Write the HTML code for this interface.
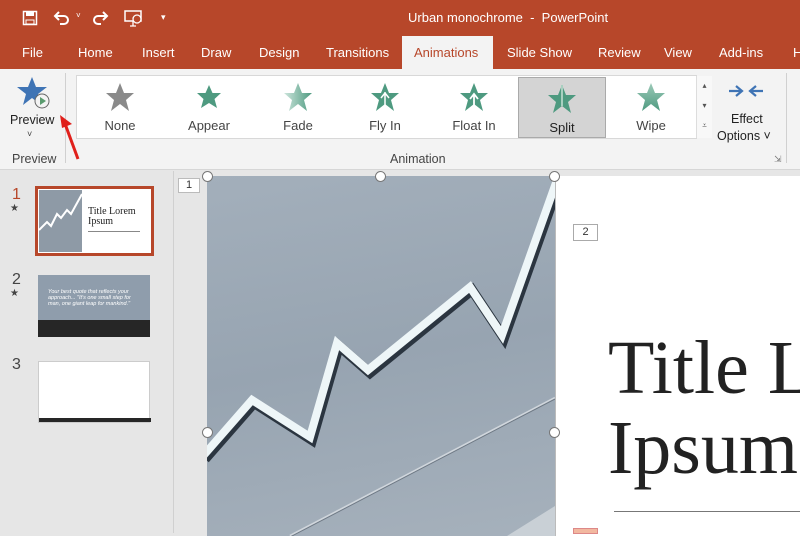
<!DOCTYPE html>
<html><head><meta charset="utf-8"><style>
*{margin:0;padding:0;box-sizing:border-box}
body{width:800px;height:533px;overflow:hidden;font-family:"Liberation Sans",sans-serif;background:#e6e6e6;position:relative}
.abs{position:absolute}
.top{left:0;top:0;width:800px;height:69px;background:#b7472a;color:#fff}
.tab{position:absolute;top:45px;font-size:13px;color:#fff}
.rib{left:0;top:69px;width:800px;height:101px;background:#f3f3f3;border-bottom:1px solid #d6d6d6}
.lbl{font-size:12.5px;color:#444;position:absolute;text-align:center}
.gal{left:76px;top:75px;width:621px;height:64px;background:#fff;border:1px solid #d8d8d8}
.it{position:absolute;top:0;width:86px;height:62px;text-align:center}
.it svg{position:absolute;left:28px;top:6px}
.it span{position:absolute;left:0;right:0;top:42px;font-size:13px;color:#444}
</style></head><body>
<div class="abs top">
 <svg class="abs" style="left:22px;top:10px" width="16" height="16" viewBox="0 0 16 16"><rect x="1.5" y="1.5" width="13" height="13" fill="none" stroke="#fff" stroke-width="1.5"/><rect x="4" y="2" width="8" height="4" fill="#fff"/><rect x="4" y="10" width="8" height="4" fill="none" stroke="#fff"/></svg>
 <svg class="abs" style="left:52px;top:10px" width="20" height="16" viewBox="0 0 20 16"><path d="M3 6h9a4 4 0 0 1 0 8H8" fill="none" stroke="#fff" stroke-width="2"/><path d="M7 2L3 6l4 4" fill="none" stroke="#fff" stroke-width="2"/></svg>
 <div class="abs" style="left:76px;top:11px;font-size:8px">˅</div>
 <svg class="abs" style="left:92px;top:10px" width="18" height="16" viewBox="0 0 18 16"><path d="M15 6H6a4 4 0 0 0 0 8h3" fill="none" stroke="#fff" stroke-width="2"/><path d="M11 2l4 4-4 4" fill="none" stroke="#fff" stroke-width="2"/></svg>
 <svg class="abs" style="left:124px;top:10px" width="20" height="17" viewBox="0 0 20 17"><rect x="1" y="1" width="16" height="10" fill="none" stroke="#fff" stroke-width="1.5"/><circle cx="13" cy="9" r="4" fill="#b7472a" stroke="#fff" stroke-width="1.3"/><path d="M9 11v5M6 16h6" stroke="#fff" stroke-width="1.3"/></svg>
 <div class="abs" style="left:161px;top:12px;font-size:9px">▾</div>
 <div class="abs" style="left:408px;top:10px;font-size:13px">Urban monochrome&nbsp; - &nbsp;PowerPoint</div>
 <span class="tab" style="left:22px">File</span>
 <span class="tab" style="left:78px">Home</span>
 <span class="tab" style="left:142px">Insert</span>
 <span class="tab" style="left:201px">Draw</span>
 <span class="tab" style="left:259px">Design</span>
 <span class="tab" style="left:326px">Transitions</span>
 <div class="abs" style="left:402px;top:36px;width:91px;height:34px;background:#f3f3f3"></div>
 <span class="tab" style="left:414px;color:#b7472a">Animations</span>
 <span class="tab" style="left:507px">Slide Show</span>
 <span class="tab" style="left:598px">Review</span>
 <span class="tab" style="left:664px">View</span>
 <span class="tab" style="left:719px">Add-ins</span>
 <span class="tab" style="left:793px">H</span>
</div>
<div class="abs rib">
 <svg class="abs" style="left:17px;top:8px" width="34" height="32" viewBox="0 0 34 32"><polygon points="15,0 19,10 30,10 21,17 24,28 15,21 6,28 9,17 0,10 11,10" fill="#3f74b5"/><circle cx="25" cy="24" r="7" fill="#f3f3f3" stroke="#666"/><polygon points="23,20 29,24 23,28" fill="#5a9b6e"/></svg>
 <div class="lbl" style="left:10px;top:44px;color:#222">Preview</div>
 <div class="lbl" style="left:27px;top:60px;font-size:9px">˅</div>
 <div class="lbl" style="left:12px;top:83px">Preview</div>
 <div class="abs" style="left:65px;top:4px;width:1px;height:90px;background:#d0d0d0"></div>
 <div class="lbl" style="left:390px;top:83px">Animation</div>
 <div class="abs" style="left:774px;top:85px;font-size:9px;color:#777">⇲</div>
 <svg class="abs" style="left:728px;top:14px" width="36" height="16" viewBox="0 0 36 16"><path d="M1 8h12M8 3l6 5-6 5M35 8H23M28 3l-6 5 6 5" fill="none" stroke="#3f74b5" stroke-width="2.2"/></svg>
 <div class="lbl" style="left:731px;top:43px;color:#222">Effect</div>
 <div class="lbl" style="left:717px;top:60px;color:#222">Options ˅</div>
 <div class="abs" style="left:786px;top:4px;width:1px;height:90px;background:#d0d0d0"></div>
</div>
<svg class="abs" style="left:58px;top:112px" width="30" height="50" viewBox="0 0 30 50"><path d="M20 47L6 9" stroke="#e0201b" stroke-width="3"/><polygon points="2,3 14,12 4,16" fill="#e0201b"/></svg>
<div class="abs gal">
 <div class="it" style="left:0"><svg width="30" height="30" viewBox="0 0 30 30"><polygon points="15,1 19,11 29,11 21,18 24,29 15,22 6,29 9,18 1,11 11,11" fill="#8a8a8a"/></svg><span>None</span></div>
 <div class="it" style="left:89px"><svg width="30" height="30" viewBox="0 0 30 30"><polygon points="15,3 18.5,11 27,11 20.5,17 23,26 15,21 7,26 9.5,17 3,11 11.5,11" fill="#4e9a80"/></svg><span>Appear</span></div>
 <div class="it" style="left:178px"><svg width="30" height="30" viewBox="0 0 30 30"><defs><linearGradient id="g"><stop offset="0" stop-color="#cde5dc"/><stop offset="1" stop-color="#4e9a80"/></linearGradient></defs><polygon points="15,1 19,11 29,11 21,18 24,29 15,22 6,29 9,18 1,11 11,11" fill="url(#g)"/></svg><span>Fade</span></div>
 <div class="it" style="left:265px"><svg width="30" height="30" viewBox="0 0 30 30"><polygon points="15,1 19,11 29,11 21,18 24,29 15,22 6,29 9,18 1,11 11,11" fill="#4e9a80"/><path d="M15 10v14M11 16l4-5 4 5" stroke="#fff" stroke-width="1.5" fill="none"/></svg><span>Fly In</span></div>
 <div class="it" style="left:354px"><svg width="30" height="30" viewBox="0 0 30 30"><polygon points="15,1 19,11 29,11 21,18 24,29 15,22 6,29 9,18 1,11 11,11" fill="#4e9a80"/><path d="M15 12v14M11 17l4-5 4 5" stroke="#fff" stroke-width="1.8" fill="none"/></svg><span>Float In</span></div>
 <div class="it" style="left:441px;top:1px;width:88px;height:61px;background:#d4d4d4;border:1px solid #aaa"><svg width="30" height="30" viewBox="0 0 30 30"><polygon points="15,1 19,11 29,11 21,18 24,29 15,22 6,29 9,18 1,11 11,11" fill="#4e9a80"/><rect x="14" y="1" width="2" height="21" fill="#a8d0c0"/></svg><span style="color:#222">Split</span></div>
 <div class="it" style="left:531px"><svg width="30" height="30" viewBox="0 0 30 30"><defs><linearGradient id="h" x1="0" y1="0" x2="0" y2="1"><stop offset="0" stop-color="#9ccab8"/><stop offset="1" stop-color="#4e9a80"/></linearGradient></defs><polygon points="15,1 19,11 29,11 21,18 24,29 15,22 6,29 9,18 1,11 11,11" fill="url(#h)"/></svg><span>Wipe</span></div>
 <div class="abs" style="left:619px;top:0;width:16px;height:62px;border-left:1px solid #ddd;background:#f8f8f8;font-size:8px;color:#555;text-align:center;line-height:20px">▴<br>▾<br>⩡</div>
</div>
<!-- left pane -->
<div class="abs" style="left:173px;top:171px;width:1px;height:362px;background:#d0d0d0"></div>
<div class="abs" style="left:12px;top:186px;font-size:16px;color:#b7472a">1</div>
<div class="abs" style="left:10px;top:203px;font-size:10px;color:#444">★</div>
<div class="abs" style="left:12px;top:271px;font-size:16px;color:#444">2</div>
<div class="abs" style="left:10px;top:288px;font-size:10px;color:#444">★</div>
<div class="abs" style="left:12px;top:356px;font-size:16px;color:#444">3</div>
<div class="abs" style="left:35px;top:186px;width:119px;height:70px;border:3px solid #b7472a;background:#fff">
 <div class="abs" style="left:1px;top:1px;width:43px;height:62px;background:#8e9aa6"></div>
 <svg class="abs" style="left:1px;top:1px" width="43" height="62"><path d="M0 40L8 32 12 36 18 24 22 28 28 20 32 24 43 4" stroke="#fff" stroke-width="2" fill="none"/></svg>
 <div class="abs" style="left:50px;top:18px;font-family:'Liberation Serif',serif;font-size:10px;line-height:10px;color:#222">Title Lorem<br>Ipsum</div>
 <div class="abs" style="left:50px;top:42px;width:52px;height:1px;background:#888"></div>
</div>
<div class="abs" style="left:38px;top:275px;width:112px;height:62px;background:#8f9dac">
 <div class="abs" style="left:10px;top:14px;width:96px;font-size:5.5px;color:#fff;font-style:italic;line-height:6px">Your best quote that reflects your approach... "It's one small step for man, one giant leap for mankind."</div>
 <div class="abs" style="left:0;top:45px;width:112px;height:17px;background:#262626"></div>
</div>
<div class="abs" style="left:38px;top:361px;width:112px;height:62px;background:#fff;border:1px solid #ccc"><div class="abs" style="left:0;bottom:0;width:112px;height:4px;background:#262626"></div></div>
<!-- slide -->
<div class="abs" style="left:178px;top:178px;width:22px;height:15px;background:#fff;border:1px solid #bbb;font-size:11px;text-align:center;color:#333">1</div>
<div class="abs" style="left:207px;top:176px;width:600px;height:360px;background:#fff"></div>
<div class="abs" style="left:207px;top:176px;width:348px;height:360px;background:linear-gradient(170deg,#a3afbb,#97a4b1 50%,#a6b1bc)"></div>
<svg class="abs" style="left:207px;top:176px" width="348" height="360"><path d="M-4 280L45 224 103 261 130 167 161 194 263 111 295 159 350 4" stroke="#2b3540" stroke-width="10" fill="none" stroke-linejoin="miter" transform="translate(2,3)"/><path d="M-4 280L45 224 103 261 130 167 161 194 263 111 295 159 350 4" stroke="#eef6f8" stroke-width="8" fill="none" stroke-linejoin="miter"/><path d="M83 360L348 222" stroke="#d0d6dc" stroke-width="2.5"/><path d="M83 361L348 223" stroke="#6d7884" stroke-width="1"/><path d="M300 360l48-30v30z" fill="#c9d0d6"/></svg>
<div class="abs" style="left:555px;top:176px;width:1px;height:360px;background:#bbb"></div>
<div class="abs" style="left:202px;top:171px;width:11px;height:11px;border-radius:50%;background:#fff;border:1px solid #777"></div>
<div class="abs" style="left:375px;top:171px;width:11px;height:11px;border-radius:50%;background:#fff;border:1px solid #777"></div>
<div class="abs" style="left:549px;top:171px;width:11px;height:11px;border-radius:50%;background:#fff;border:1px solid #777"></div>
<div class="abs" style="left:202px;top:427px;width:11px;height:11px;border-radius:50%;background:#fff;border:1px solid #777"></div>
<div class="abs" style="left:549px;top:427px;width:11px;height:11px;border-radius:50%;background:#fff;border:1px solid #777"></div>
<div class="abs" style="left:573px;top:224px;width:25px;height:17px;background:#fff;border:1px solid #aaa;font-size:11px;text-align:center;color:#333;line-height:15px">2</div>
<div class="abs" style="left:608px;top:328px;font-family:'Liberation Serif',serif;font-size:76px;line-height:80px;color:#222;white-space:nowrap">Title L<br>Ipsum</div>
<div class="abs" style="left:614px;top:511px;width:190px;height:1px;background:#777"></div>
<div class="abs" style="left:573px;top:528px;width:25px;height:6px;background:#f2b8a0;border:1px solid #d88"></div>
</body></html>
